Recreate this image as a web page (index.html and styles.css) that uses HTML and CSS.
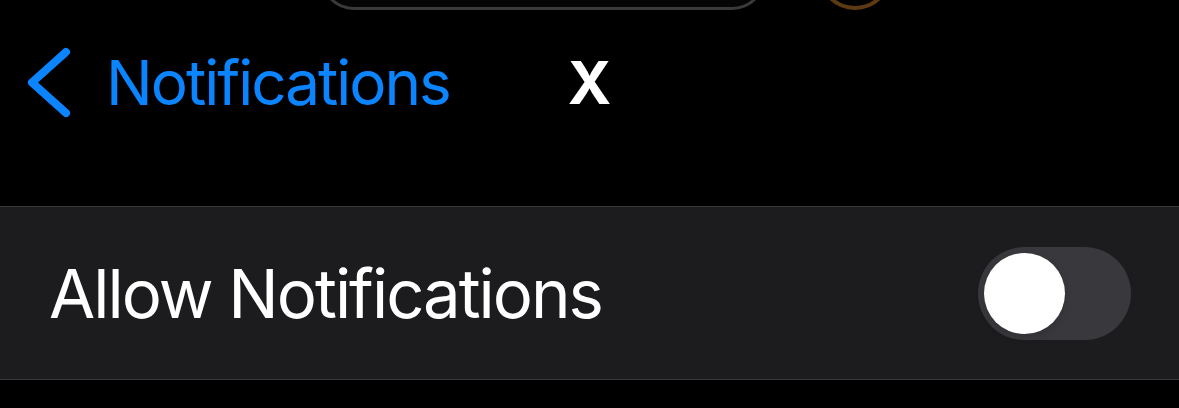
FILE: index.html
```html
<!DOCTYPE html>
<html>
<head>
<meta charset="utf-8">
<link rel="stylesheet" href="styles.css">
</head>
<body>
<div class="screen">
  <div class="status">
    <div class="island"></div>
    <div class="ring"></div>
  </div>
  <div class="nav">
    <div class="back">
      <svg class="chevron" width="50" height="78" viewBox="0 0 50 78">
        <path d="M42 8 L8 38.5 L42 69" fill="none" stroke="#0a84ff" stroke-width="8" stroke-linecap="round" stroke-linejoin="round"/>
      </svg>
      <span class="back-label">Notifications</span>
    </div>
    <div class="title">X</div>
    <div class="spacer"></div>
  </div>
  <div class="row">
    <span class="row-label">Allow Notifications</span>
    <div class="toggle"><div class="knob"></div></div>
  </div>
</div>
</body>
</html>
```
FILE: styles.css
```css
html, body {
  margin: 0;
  padding: 0;
  background: #000;
}
.screen {
  width: 1179px;
  height: 408px;
  background: #000;
  font-family: Inter, "Noto Sans", sans-serif;
  overflow: hidden;
}
.status {
  position: relative;
  height: 44px;
}
.island {
  position: absolute;
  left: 320px;
  top: -60px;
  width: 440px;
  height: 64px;
  border: 3px solid #3a3a3a;
  border-radius: 34px;
  background: #050505;
}
.ring {
  position: absolute;
  left: 818px;
  top: -64px;
  width: 66px;
  height: 66px;
  border: 4px solid #5e3a12;
  border-radius: 50%;
}
.nav {
  display: grid;
  grid-template-columns: 1fr auto 1fr;
  align-items: center;
  height: 78px;
}
.back {
  display: flex;
  align-items: center;
  padding-left: 24px;
}
.chevron {
  display: block;
  flex: none;
}
.back-label {
  color: #0a84ff;
  font-size: 62px;
  line-height: 78px;
  margin-left: 32px;
  letter-spacing: -2px;
}
.title {
  color: #fff;
  font-size: 59px;
  font-weight: 700;
  line-height: 78px;
}
.row {
  margin-top: 84px;
  height: 172px;
  background: #1c1c1e;
  border-top: 1px solid #38383a;
  border-bottom: 1px solid #38383a;
  display: flex;
  align-items: center;
  justify-content: space-between;
  padding: 0 48px 0 49px;
}
.row-label {
  color: #fff;
  font-size: 67px;
  letter-spacing: -2px;
}
.toggle {
  width: 153px;
  height: 93px;
  border-radius: 47px;
  background: #39393d;
  display: flex;
  align-items: center;
  padding: 0 6px;
  box-sizing: border-box;
}
.knob {
  width: 81px;
  height: 81px;
  border-radius: 50%;
  background: #fff;
  box-shadow: 0 3px 8px rgba(0,0,0,0.15);
}
```
